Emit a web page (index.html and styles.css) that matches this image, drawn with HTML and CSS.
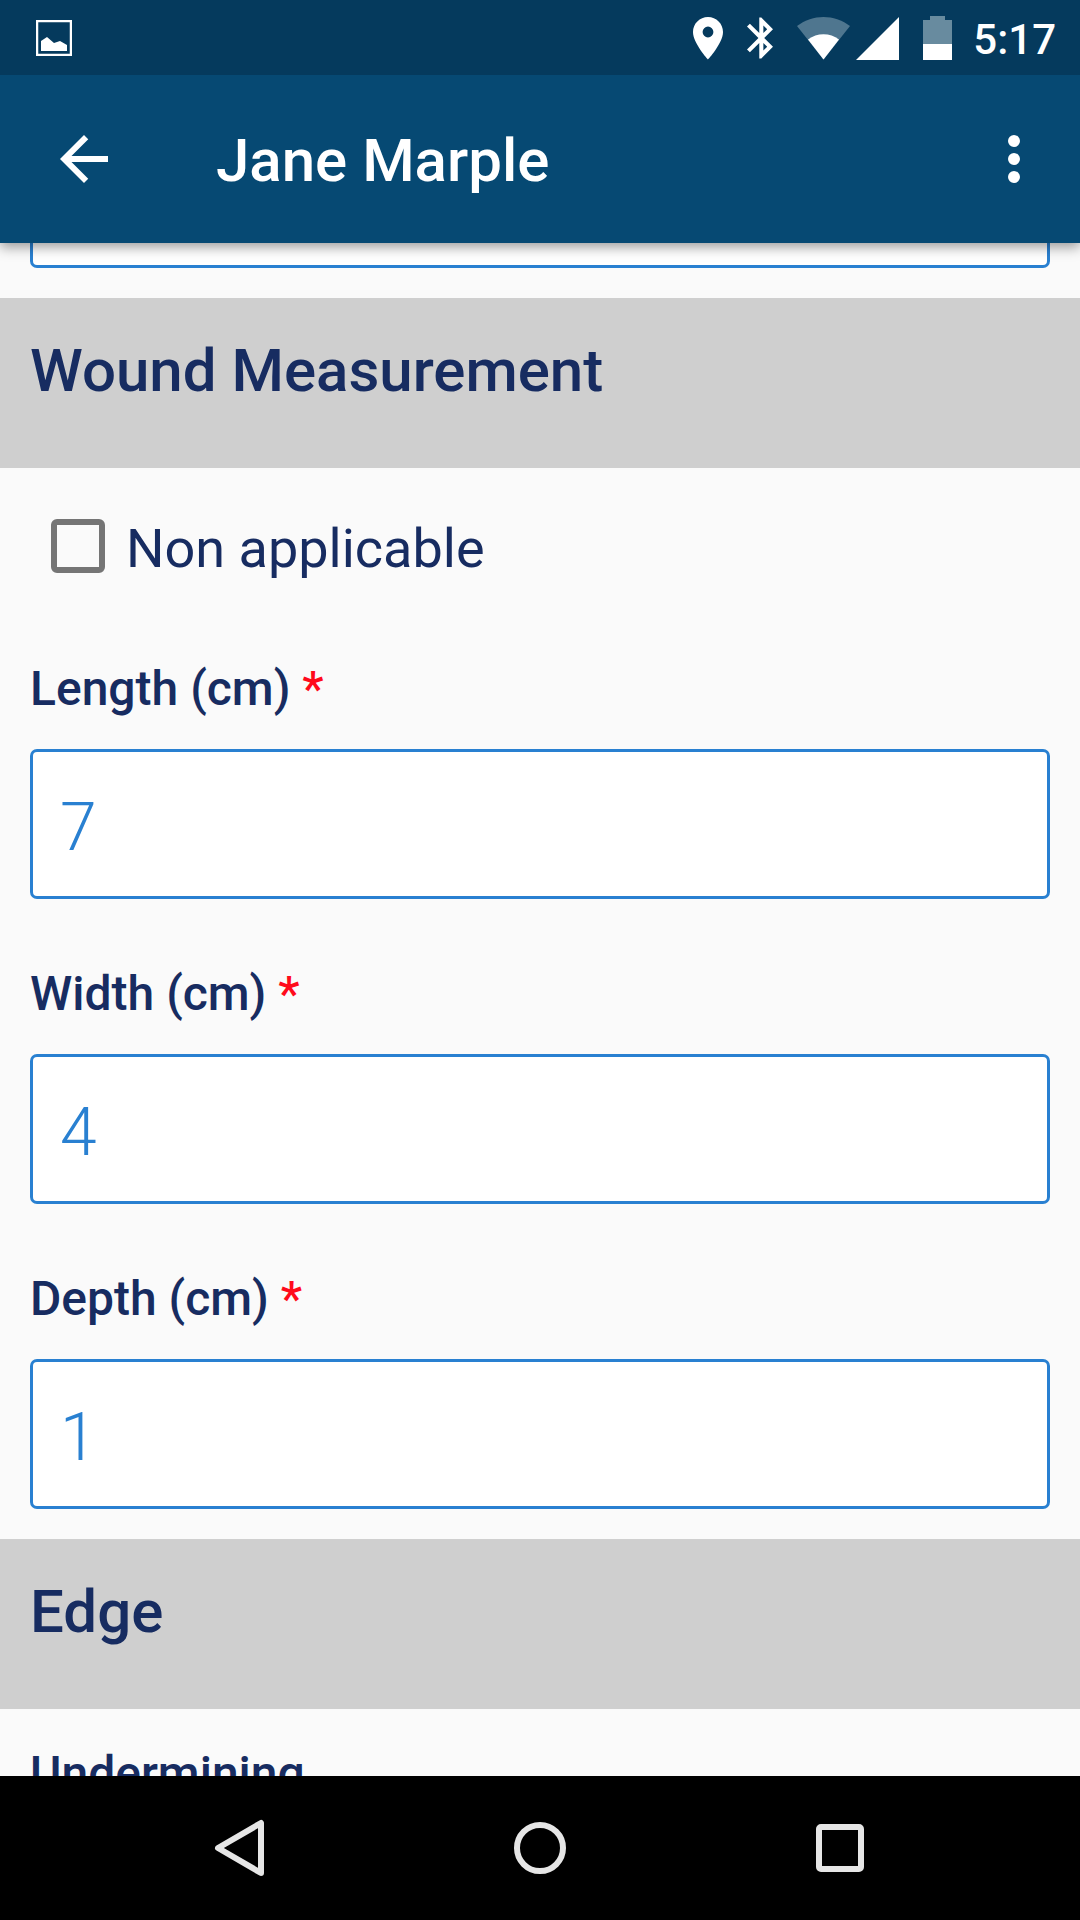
FILE: index.html
```
<!DOCTYPE html>
<html lang="en">
<head>
    <meta charset="UTF-8">
    <meta name="viewport" content="width=device-width, initial-scale=1.0">
    <title>Jane Marple</title>
    <link rel="stylesheet" href="styles.css">
</head>
<body>
    <!-- Status Bar -->
    <div class="status-bar">
        <svg class="status-picture" width="36" height="36" viewBox="0 0 36 36">
            <rect x="1" y="1" width="34" height="34" fill="none" stroke="#fff" stroke-width="2.500"/>
            <path fill="#fff" d="M5 21l6-4 7 6 6-2 7 4v6H5z"/>
        </svg>
        <svg width="30" height="44" viewBox="0 0 30 44">
            <path fill="#fff" fill-rule="evenodd" d="M15 1C6.700 1 0 7.700 0 16c0 11.200 15 27.500 15 27.500S30 27.200 30 16C30 7.700 23.300 1 15 1zm0 20.400a5.400 5.400 0 1 1 0-10.800 5.400 5.400 0 0 1 0 10.800z"/>
        </svg>
        <svg width="26" height="44" viewBox="5 1.700 12.710 20.600">
            <path fill="#fff" d="M17.710 7.710L12 2h-1v7.590L6.410 5 5 6.410 10.590 12 5 17.590 6.410 19 11 14.410V22h1l5.710-5.710-4.300-4.290 4.300-4.290zM13 5.830l1.880 1.880L13 9.590V5.830zm1.880 10.460L13 18.170v-3.760l1.880 1.880z"/>
        </svg>
        <svg width="53" height="44" viewBox="0 0 53 44">
            <path fill="#4f768f" d="M0 10C16-2 37-2 53 10L26.500 43.500z"/>
            <path fill="#fff" d="M11 23.500c9-7 22-7 31 0L26.500 43.500z"/>
        </svg>
        <svg class="status-signal" width="43" height="44" viewBox="0 0 43 44">
            <path fill="#fff" d="M43 1v43H0z"/>
        </svg>
        <svg width="29" height="44" viewBox="0 0 29 44">
            <path fill="#688b9f" d="M0 4h7V0h15v4h7v25H0z"/>
            <path fill="#fff" d="M0 28h29v16H0z"/>
        </svg>
        <span class="status-time">5:17</span>
    </div>

    <!-- App Bar -->
    <header class="app-bar">
        <button class="icon-button" aria-label="Back">
            <svg width="72" height="72" viewBox="0 0 24 24"><path fill="#fff" d="M20 11H7.830l5.590-5.590L12 4l-8 8 8 8 1.410-1.410L7.830 13H20v-2z"/></svg>
        </button>
        <h1>Jane Marple</h1>
        <button class="icon-button" aria-label="More options">
            <svg width="72" height="72" viewBox="0 0 24 24"><path fill="#fff" d="M12 8a2 2 0 1 0 0-4 2 2 0 0 0 0 4zm0 2a2 2 0 1 0 0 4 2 2 0 0 0 0-4zm0 6a2 2 0 1 0 0 4 2 2 0 0 0 0-4z"/></svg>
        </button>
    </header>

    <!-- Assessment Form, scrolled part way down -->
    <main class="content">
        <form class="assessment">
            <div class="fields fields-previous">
                <input type="text" aria-label="Notes">
            </div>

            <h2>Wound Measurement</h2>
            <div class="check-row">
                <input type="checkbox" id="non-applicable">
                <label for="non-applicable">Non applicable</label>
            </div>
            <div class="fields">
                <div class="field">
                    <label for="length">Length (cm) <span class="required">*</span></label>
                    <input type="text" id="length" inputmode="decimal" value="7">
                </div>
                <div class="field">
                    <label for="width">Width (cm) <span class="required">*</span></label>
                    <input type="text" id="width" inputmode="decimal" value="4">
                </div>
                <div class="field">
                    <label for="depth">Depth (cm) <span class="required">*</span></label>
                    <input type="text" id="depth" inputmode="decimal" value="1">
                </div>
            </div>

            <h2>Edge</h2>
            <div class="fields">
                <div class="field">
                    <label for="undermining">Undermining</label>
                    <input type="text" id="undermining">
                </div>
            </div>
        </form>
    </main>

    <!-- Navigation Bar -->
    <nav class="nav-bar">
        <button class="icon-button" aria-label="Back">
            <svg width="72" height="72" viewBox="0 0 72 72"><path fill="none" stroke="#e6e6e6" stroke-width="6" stroke-linejoin="round" d="M57 11v50L14 36z"/></svg>
        </button>
        <button class="icon-button" aria-label="Home">
            <svg width="72" height="72" viewBox="0 0 72 72"><circle cx="36" cy="36" r="23" fill="none" stroke="#e6e6e6" stroke-width="6"/></svg>
        </button>
        <button class="icon-button" aria-label="Recent apps">
            <svg width="72" height="72" viewBox="0 0 72 72"><rect x="15" y="15" width="42" height="42" rx="2" fill="none" stroke="#e6e6e6" stroke-width="6"/></svg>
        </button>
    </nav>
</body>
</html>
```
FILE: styles.css
```
* {
    box-sizing: border-box;
}

body {
    display: flex;
    flex-direction: column;
    height: 100vh;
    margin: 0;
    font-family: Roboto, sans-serif;
    color: #172c61;
    background: #fafafa;
}

svg {
    display: block;
    flex: none;
}

/* Status bar */
.status-bar {
    display: flex;
    flex: none;
    align-items: center;
    gap: 24px;
    position: relative;
    z-index: 2;
    height: 75px;
    padding: 0 24px 0 36px;
    background: #053a5d;
}

.status-picture {
    margin-right: auto;
}

.status-signal {
    margin-left: -18px;
}

.status-time {
    margin-left: -3px;
    padding-top: 4px;
    font-size: 42px;
    font-weight: 500;
    line-height: 48px;
    color: #fff;
}

/* App bar */
.app-bar {
    display: flex;
    flex: none;
    align-items: center;
    position: relative;
    z-index: 1;
    height: 168px;
    padding: 0 30px 0 48px;
    color: #fff;
    background: #064973;
    box-shadow: 0 4px 12px rgba(0, 0, 0, 0.4);
}

.app-bar h1 {
    flex: 1;
    margin: 0;
    padding: 4px 0 0 96px;
    font-size: 60px;
    font-weight: 500;
    line-height: 72px;
}

.icon-button {
    padding: 0;
    border: none;
    background: none;
    cursor: pointer;
}

/* Form */
.content {
    flex: 1;
    min-height: 0;
    overflow: hidden;
}

.assessment {
    margin-top: -125px;
}

h2 {
    margin: 0;
    padding: 37px 30px 61px;
    font-size: 60px;
    font-weight: 500;
    line-height: 72px;
    background: #cfcfcf;
}

.check-row {
    display: flex;
    align-items: center;
    gap: 21px;
    height: 156px;
    padding: 0 51px;
}

.check-row label {
    padding-top: 6px;
    font-size: 54px;
    line-height: 64px;
}

input[type="checkbox"] {
    appearance: none;
    width: 54px;
    height: 54px;
    margin: 0;
    border: 6px solid #757575;
    border-radius: 6px;
}

input[type="checkbox"]:checked {
    background: #2980d1;
}

.fields {
    display: flex;
    flex-direction: column;
    gap: 67px;
    padding: 37px 30px 30px;
}

.fields-previous {
    padding-top: 0;
}

.field {
    display: flex;
    flex-direction: column;
    gap: 32px;
}

.field label {
    font-size: 48px;
    font-weight: 500;
    line-height: 56px;
}

.required {
    color: #ff0a1b;
}

input[type="text"] {
    width: 100%;
    height: 150px;
    padding: 6px 27px 0;
    border: 3px solid #2980d1;
    border-radius: 7px;
    outline: none;
    font-family: inherit;
    font-size: 66px;
    font-weight: 300;
    color: #2980d1;
    background: #fff;
}

/* Navigation bar */
.nav-bar {
    display: flex;
    flex: none;
    align-items: center;
    justify-content: center;
    gap: 228px;
    height: 144px;
    background: #000;
}
```
